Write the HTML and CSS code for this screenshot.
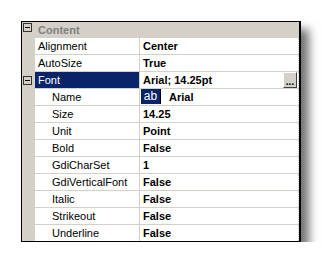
FILE: index.html
```html
<!DOCTYPE html>
<html lang="en">
<head>
  <meta charset="UTF-8">
  <title>Properties</title>
  <link rel="stylesheet" href="styles.css">
</head>
<body>
  <div class="grid">
    <div class="row head">
      <div class="gutter"><span class="toggle"></span></div>
      <div class="cat">Content</div>
    </div>
    <div class="row">
      <div class="gutter"></div>
      <div class="name">Alignment</div>
      <div class="value">Center</div>
    </div>
    <div class="row">
      <div class="gutter"></div>
      <div class="name">AutoSize</div>
      <div class="value">True</div>
    </div>
    <div class="row">
      <div class="gutter"><span class="toggle"></span></div>
      <div class="name selected">Font</div>
      <div class="value">Arial; 14.25pt<span class="dots">...</span></div>
    </div>
    <div class="row">
      <div class="gutter"></div>
      <div class="name sub">Name</div>
      <div class="value"><span class="sample">ab</span>Arial</div>
    </div>
    <div class="row">
      <div class="gutter"></div>
      <div class="name sub">Size</div>
      <div class="value">14.25</div>
    </div>
    <div class="row">
      <div class="gutter"></div>
      <div class="name sub">Unit</div>
      <div class="value">Point</div>
    </div>
    <div class="row">
      <div class="gutter"></div>
      <div class="name sub">Bold</div>
      <div class="value">False</div>
    </div>
    <div class="row">
      <div class="gutter"></div>
      <div class="name sub">GdiCharSet</div>
      <div class="value">1</div>
    </div>
    <div class="row">
      <div class="gutter"></div>
      <div class="name sub">GdiVerticalFont</div>
      <div class="value">False</div>
    </div>
    <div class="row">
      <div class="gutter"></div>
      <div class="name sub">Italic</div>
      <div class="value">False</div>
    </div>
    <div class="row">
      <div class="gutter"></div>
      <div class="name sub">Strikeout</div>
      <div class="value">False</div>
    </div>
    <div class="row last">
      <div class="gutter"></div>
      <div class="name sub">Underline</div>
      <div class="value">False</div>
    </div>
  </div>
</body>
</html>
```

FILE: styles.css
```css
body {
  margin: 0;
  background: white;
  font-family: "Liberation Sans", Arial, sans-serif;
  font-size: 11px;
}

.grid {
  margin: 21px 0 0 21px;
  width: 277px;
  border: 1px solid #000;
  border-right-width: 2px;
  background: white;
  box-shadow: 8px 8px 9px rgba(0,0,0,0.55);
}

.row {
  display: flex;
  height: 16px;
  border-bottom: 1px solid #d4d0c8;
}

.row.head {
  background: #d4d0c8;
  border-bottom: none;
}

.row.last {
  border-bottom: none;
}

.gutter {
  width: 13px;
  background: #d4d0c8;
  position: relative;
}

.toggle {
  position: absolute;
  left: 1px;
  top: 1px;
  width: 7px;
  height: 7px;
  border: 1px solid #333;
}

.toggle::after {
  content: "";
  position: absolute;
  left: 1px;
  top: 3px;
  width: 5px;
  height: 1px;
  background: #000;
}

.row:not(.head) .toggle {
  top: 4px;
}

.cat {
  padding-left: 3px;
  line-height: 16px;
  font-weight: bold;
  color: #808080;
}

.name {
  width: 101px;
  padding-left: 3px;
  border-right: 1px solid #d4d0c8;
  line-height: 16px;
  color: #000;
}

.name.sub {
  padding-left: 17px;
  width: 87px;
}

.name.selected {
  background: #0a246a;
  color: white;
}

.value {
  flex: 1;
  display: flex;
  align-items: center;
  padding-left: 3px;
  line-height: 16px;
  font-weight: bold;
  color: #000;
  position: relative;
  border-right: 1px dotted #c8c8c8;
}

.dots {
  position: absolute;
  right: 1px;
  top: 0;
  width: 12px;
  height: 14px;
  background: #d4d0c8;
  border: 1px solid;
  border-color: #fff #404040 #404040 #fff;
  line-height: 18px;
  text-align: center;
  font-size: 10px;
}

.sample {
  display: inline-block;
  width: 19px;
  height: 15px;
  margin-left: -2px;
  margin-right: 8px;
  background: #0a246a;
  border-right: 1px solid #000;
  color: white;
  font-weight: normal;
  font-size: 12px;
  line-height: 15px;
  text-align: center;
  align-self: flex-start;
}
```
